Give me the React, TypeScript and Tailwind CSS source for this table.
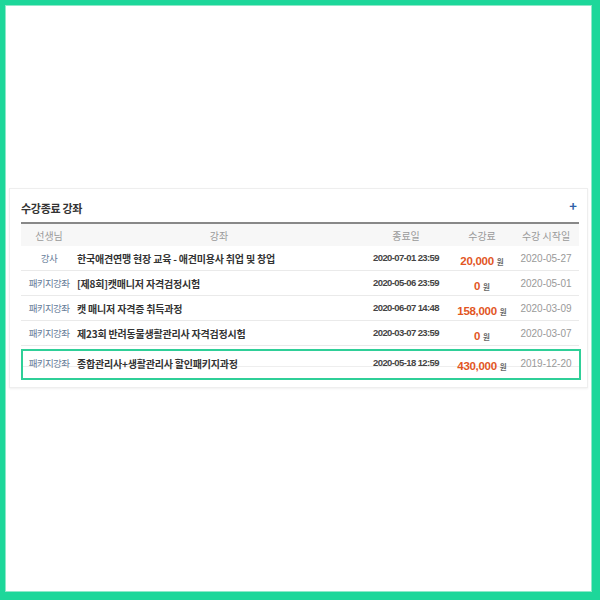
const rows = [
  { teacher: "강사", title: "한국애견연맹 현장 교육 - 애견미용사 취업 및 창업", end: "2020-07-01 23:59", fee: "20,000", start: "2020-05-27" },
  { teacher: "패키지강좌", title: "[제8회]캣매니저 자격검정시험", end: "2020-05-06 23:59", fee: "0", start: "2020-05-01" },
  { teacher: "패키지강좌", title: "캣 매니저 자격증 취득과정", end: "2020-06-07 14:48", fee: "158,000", start: "2020-03-09" },
  { teacher: "패키지강좌", title: "제23회 반려동물생활관리사 자격검정시험", end: "2020-03-07 23:59", fee: "0", start: "2020-03-07" },
];

const last = { teacher: "패키지강좌", title: "종합관리사+생활관리사 할인패키지과정", end: "2020-05-18 12:59", fee: "430,000", start: "2019-12-20" };

type Row = typeof last;

function Cells({ r }: { r: Row }) {
  return (
    <>
      <div className="text-center text-[9.5px] text-[#667c98] tracking-[-0.6px]">{r.teacher}</div>
      <div className="text-[10px] font-bold text-[#333] tracking-[-0.2px]">{r.title}</div>
      <div className="text-center text-[9.5px] font-bold text-[#444] tracking-[-0.6px] font-['Liberation_Sans',sans-serif]">{r.end}</div>
      <div className="text-center">
        <span className="text-[11.5px] font-bold text-[#e2561f] font-['Liberation_Sans',sans-serif] tracking-[-0.3px]">{r.fee}</span>
        <span className="text-[7.5px] text-[#666] ml-[3px] font-bold">원</span>
      </div>
      <div className="text-center text-[10px] text-[#999] font-['Liberation_Sans',sans-serif]">{r.start}</div>
    </>
  );
}

export default function App() {
  const cols = "grid grid-cols-[56px_284px_90px_62px_66px] items-center";
  return (
    <div className="w-[600px] h-[600px] bg-[#1dd79a] pt-[5px] pl-[5px] pr-[8px] pb-[8px] font-['Noto_Sans_CJK_KR',sans-serif]">
      <div className="h-full bg-white border border-[#8ee9c9] pt-[182px] px-[3px]">
        {/* 수강종료 강좌 패널 */}
        <div className="bg-white border border-[#eeeeee] shadow-[0_1px_2px_rgba(0,0,0,0.06)] pt-[11px] pl-[11px] pr-[9px] pb-[7px]">
          <div className="flex items-center justify-between h-[16px] mb-[6px]">
            <h2 className="text-[11px] font-bold text-[#333] tracking-[-0.3px]">수강종료 강좌</h2>
            <span className="text-[13px] font-bold text-[#2f5fa8] leading-none mr-[1px] -mt-[5px]">+</span>
          </div>

          <div className="w-[558px]">
            <div className={`${cols} h-[24px] bg-[#f7f7f7] border-t-2 border-[#888] text-[10px] text-[#9a9a9a]`}>
              <div className="text-center">선생님</div>
              <div className="text-center">강좌</div>
              <div className="text-center">종료일</div>
              <div className="text-center">수강료</div>
              <div className="text-center">수강 시작일</div>
            </div>

            {rows.map((r, i) => (
              <div key={i} className={`${cols} h-[25px] border-b border-[#eaeaea]`}>
                <Cells r={r} />
              </div>
            ))}

            <div className="mt-[3px] w-[560px] border-2 border-[#2fcf98] pb-[11px]">
              <div className={`${cols} h-[15px] -ml-[2px]`}>
                <Cells r={last} />
              </div>
              <div className="border-b border-[#eeeeee]" />
            </div>
          </div>
        </div>
      </div>
    </div>
  );
}
